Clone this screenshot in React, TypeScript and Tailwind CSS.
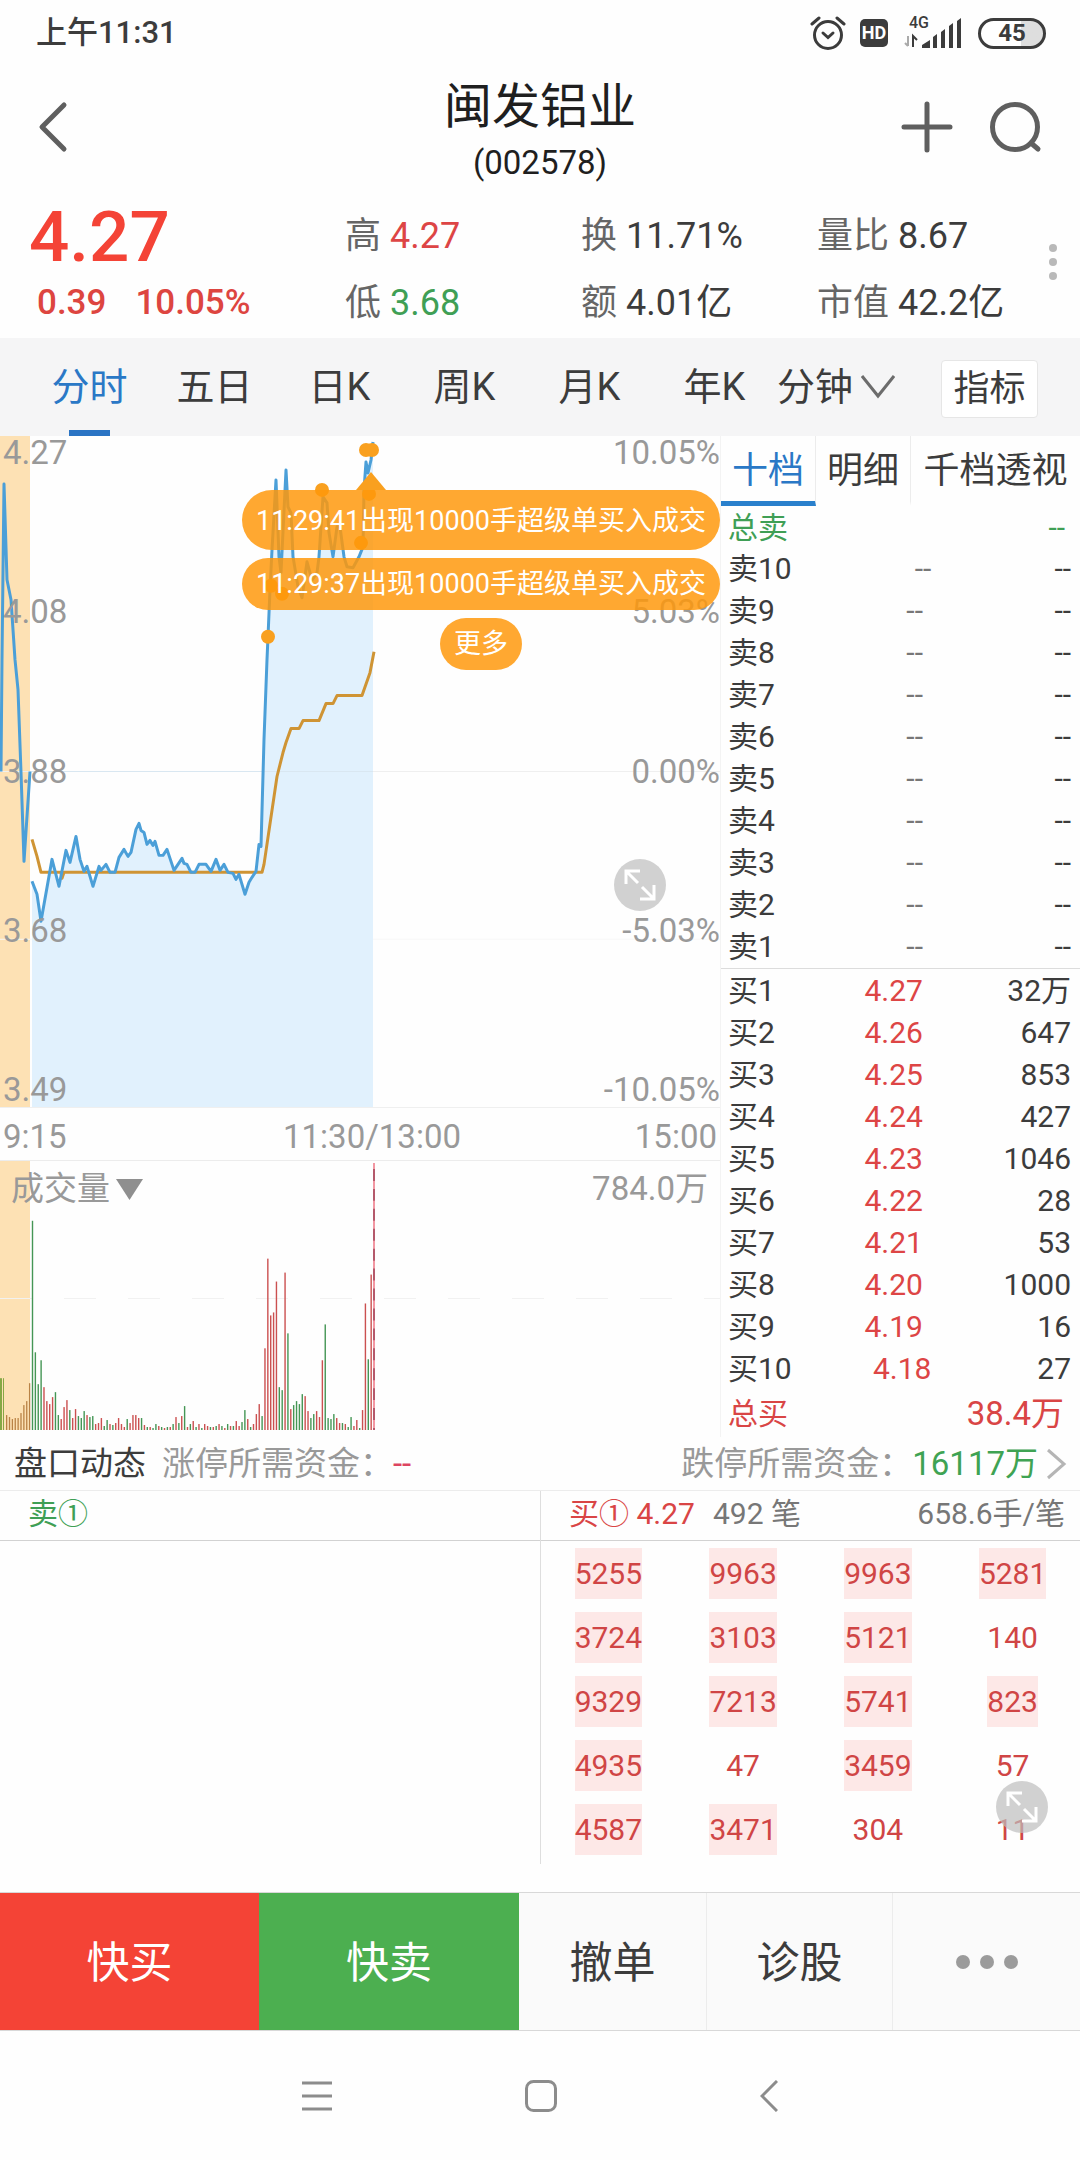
import { useState } from 'react';
import type { ReactNode } from 'react';

type Tone = 'red' | 'green' | 'dark';

const toneClass: Record<Tone, string> = {
  red: 'text-[#dd4545]',
  green: 'text-[#3f9f55]',
  dark: 'text-[#3c3c3c]',
};

const stats: { label: string; value: string; tone: Tone }[] = [
  { label: '高', value: '4.27', tone: 'red' },
  { label: '换', value: '11.71%', tone: 'dark' },
  { label: '量比', value: '8.67', tone: 'dark' },
  { label: '低', value: '3.68', tone: 'green' },
  { label: '额', value: '4.01亿', tone: 'dark' },
  { label: '市值', value: '42.2亿', tone: 'dark' },
];

const periods = ['分时', '五日', '日K', '周K', '月K', '年K'];
const bookTabs = ['十档', '明细', '千档透视'];

const sells = [10, 9, 8, 7, 6, 5, 4, 3, 2, 1];

const buys = [
  ['买1', '4.27', '32万'],
  ['买2', '4.26', '647'],
  ['买3', '4.25', '853'],
  ['买4', '4.24', '427'],
  ['买5', '4.23', '1046'],
  ['买6', '4.22', '28'],
  ['买7', '4.21', '53'],
  ['买8', '4.20', '1000'],
  ['买9', '4.19', '16'],
  ['买10', '4.18', '27'],
];

const priceScale = ['4.27', '4.08', '3.88', '3.68', '3.49'];
const percentScale = ['10.05%', '5.03%', '0.00%', '-5.03%', '-10.05%'];

const queue = [
  5255, 9963, 9963, 5281, 3724, 3103, 5121, 140, 9329, 7213, 5741, 823, 4935,
  47, 3459, 57, 4587, 3471, 304, 11,
];

const auctionLine =
  '1,336 2,224 4,48 7,144 11,164 15,224 18,254 21,337 24,426 30,336';

const priceLine =
  '32,446 37,459 41,486 52,424 59,451 66,415 70,427 76,401 80,424 84,436 87,431 93,451 99,431 101,435 106,429 110,437 115,437 119,422 124,414 128,421 131,417 136,394 139,388 141,395 144,397 147,409 150,405 153,410 155,406 159,420 163,420 167,414 174,435 182,423 184,428 187,429 191,437 195,437 199,429 206,429 211,436 216,424 220,435 224,429 228,437 233,438 236,444 239,439 245,459 249,447 252,442 256,436 259,409 261,411 264,304 267,224 268,201 270,154 272,114 276,44 279,121 281,137 286,34 288,71 291,77 293,121 298,151 302,162 307,126 312,144 317,137 319,121 323,61 327,67 329,97 333,121 337,91 340,91 344,121 347,131 353,132 359,121 363,111 364,54 366,26 368,37 371,24 373,6';

const averageLine =
  '32,404 37,421 41,437 61,437 62,443 64,437 262,437 264,429 277,341 283,317 286,307 291,293 299,293 303,285 319,285 326,268 333,268 337,260 362,260 370,237 374,216';

const markers = [
  [366, 14],
  [372, 14],
  [322, 54],
  [369, 58],
  [361, 107],
  [271, 150],
  [282, 158],
  [268, 201],
];

const auctionVolume = [15, 13, 11, 12, 12, 17, 25, 29, 47];

// one entry per minute, negative = sell side
const volume = [
  -210, -78, -46, -70, 43, 29, 26, 33, -38, -15, 11, 23, 30, -20, 12, 21, -14,
  -12, -19, 15, -13, -14, 6, 7, 12, -4, -10, 6, -5, 7, 12, 6, 3, -11, 7, 15, 15,
  12, -12, 5, -3, 3, -2, -6, 4, -3, 2, -3, 3, -6, 13, -7, 14, -24, 3, -6, 9, -3,
  6, -2, 6, 4, -3, 3, -4, 6, -4, 2, -6, 4, -4, 9, 4, -8, -20, 11, -3, 6, 16, 26,
  -14, 82, 172, 115, 118, 149, -43, -40, 158, -97, 21, -25, -29, -26, -36, 34,
  19, -12, -16, 19, 13, 70, -106, -12, -11, -16, 12, 7, -7, 6, -3, -13, 4, 10,
  -2, 20, 127, -71, 156,
];

function StatusBar() {
  return (
    <div className="flex h-[66px] items-center justify-between pl-9 pr-[34px] text-[#3c3c3c]">
      <span className="text-[31px] font-medium leading-[36px]">上午11:31</span>
      <div className="flex items-center">
        <svg width="36" height="36" viewBox="0 0 36 36" fill="none" stroke="#3c3c3c" strokeWidth="3" strokeLinecap="round">
          <circle cx="18" cy="20" r="13.5" />
          <path d="M13 18l5 4.500 5-4.500" />
          <path d="M2 9l7-6M34 9l-7-6" />
        </svg>
        <span className="ml-[14px] flex h-7 w-7 items-center justify-center rounded-[5px] bg-[#3c3c3c] text-[18px] font-bold leading-none text-white">
          HD
        </span>
        <svg className="ml-[17px] overflow-visible" width="58" height="36" viewBox="0 0 58 36" fill="#3c3c3c">
          <text x="4" y="13" fontSize="16" fontWeight="500">4G</text>
          <path d="M3 21v10M3 31l-3-3" stroke="#aaa" strokeWidth="2" fill="none" />
          <path d="M8 32V21l4 4" stroke="#3c3c3c" strokeWidth="2" fill="none" />
          <path d="M17 33v-3l8-5v8zM28 33V22l4-3v14zM36 33V17l4-3v19zM44 33V11l4-3v25zM52 33V6l4-3v30z" />
        </svg>
        <span className="ml-[15px] flex h-[31px] w-[68px] items-center justify-center rounded-full border-[3px] border-[#3c3c3c] bg-linear-to-r from-white from-65% to-[#dedede] to-65% text-[24px] font-bold leading-none">
          45
        </span>
      </div>
    </div>
  );
}

function Header() {
  return (
    <header className="grid h-[122px] grid-cols-3 items-center pl-[38px] pr-[38px]">
      <button aria-label="返回" className="w-10">
        <svg width="32" height="52" viewBox="0 0 32 52" fill="none" stroke="#5f5f5f" strokeWidth="5" strokeLinecap="round" strokeLinejoin="round">
          <path d="M26 4L4 26l22 22" />
        </svg>
      </button>
      <div className="pt-2 text-center text-[#1f1f1f]">
        <h1 className="text-[48px] leading-[64px]">闽发铝业</h1>
        <p className="text-[33px] leading-[48px]">(002578)</p>
      </div>
      <div className="flex justify-end gap-[37px]">
        <button aria-label="加自选">
          <svg width="52" height="52" viewBox="0 0 52 52" stroke="#5f5f5f" strokeWidth="5" strokeLinecap="round">
            <path d="M3 26h46M26 3v46" />
          </svg>
        </button>
        <button aria-label="搜索">
          <svg width="52" height="52" viewBox="0 0 52 52" fill="none" stroke="#5f5f5f" strokeWidth="5" strokeLinecap="round">
            <circle cx="25" cy="26" r="22.500" />
            <path d="M41 42l7 6" />
          </svg>
        </button>
      </div>
    </header>
  );
}

function Quote() {
  return (
    <section className="flex h-[150px] items-center pl-[29px] pt-[14px]">
      <div className="w-[316px] shrink-0 pb-2.5">
        <p className="text-[71px] font-medium leading-[76px] text-[#f44336]">4.27</p>
        <p className="flex gap-[29px] pl-2 text-[35px] font-medium leading-[56px] text-[#dd4540]">
          <span>0.39</span>
          <span>10.05%</span>
        </p>
      </div>
      <dl className="grid flex-1 grid-cols-[236px_236px_1fr] text-[36px] leading-[67px]">
        {stats.map((s) => (
          <div key={s.label} className="flex gap-[9px]">
            <dt className="text-[#666]">{s.label}</dt>
            <dd className={toneClass[s.tone]}>{s.value}</dd>
          </div>
        ))}
      </dl>
      <button aria-label="更多行情" className="mr-[23px] flex flex-col gap-1.5 pb-4">
        <span className="h-2 w-2 rounded-full bg-[#b9b9b9]" />
        <span className="h-2 w-2 rounded-full bg-[#b9b9b9]" />
        <span className="h-2 w-2 rounded-full bg-[#b9b9b9]" />
      </button>
    </section>
  );
}

function PeriodTabs() {
  const [active, setActive] = useState('分时');
  return (
    <nav className="flex h-[98px] items-stretch bg-[#f5f5f6] pl-[27px] pr-[42px] text-[38px] text-[#3c3c3c]">
      {periods.map((p) => (
        <button
          key={p}
          onClick={() => setActive(p)}
          className={`flex w-[125px] flex-col items-center ${
            active === p ? 'text-[#2a78c6]' : ''
          }`}
        >
          <span className="h-[92px] leading-[98px]">{p}</span>
          {active === p && <span className="h-1.5 w-[41px] bg-[#2a74c4]" />}
        </button>
      ))}
      <button className="flex items-center gap-2">
        分钟
        <svg width="34" height="24" viewBox="0 0 34 24" fill="none" stroke="#6c6c6c" strokeWidth="3">
          <path d="M1 1l16 20L33 1" />
        </svg>
      </button>
      <button className="ml-auto mt-1 h-[58px] w-[97px] self-center rounded-sm border border-[#e6e6e6] bg-white text-[36px] leading-none">
        指标
      </button>
    </nav>
  );
}

function ExpandIcon() {
  return (
    <svg width="52" height="52" viewBox="0 0 52 52" fill="none" stroke="#fff" strokeWidth="3">
      <circle cx="26" cy="26" r="26" fill="#bdbdbd" fillOpacity="0.7" stroke="none" />
      <path d="M12 25V12h14M12 12l12 12M28 28l12 12M40 26v14H26" />
    </svg>
  );
}

function ScaleLabels({ values, className }: { values: string[]; className: string }) {
  return (
    <div className={`absolute inset-y-0 flex flex-col justify-between text-[33px] leading-[34px] text-[#999] ${className}`}>
      {values.map((v) => (
        <span key={v}>{v}</span>
      ))}
    </div>
  );
}

function Alert({ children, className }: { children: ReactNode; className: string }) {
  return (
    <button className={`rounded-full bg-[#ff980a]/84 px-3.5 text-[27px] text-white ${className}`}>
      {children}
    </button>
  );
}

function PriceChart() {
  return (
    <div className="relative h-[672px] border-b border-[#efefef]">
      <svg className="block h-full w-full" viewBox="0 0 720 672" preserveAspectRatio="none" fill="none">
        <rect width="30" height="672" fill="#fde1b4" />
        <path d="M0 336h720" stroke="#efefef" strokeWidth="1" />
        <path d="M0 504h720" stroke="#f7f7f7" strokeWidth="1" />
        <polygon points={`32,672 ${priceLine} 373,672`} fill="#e1f1fd" />
        <path d="M32 336h341" stroke="#d9e7f1" strokeWidth="1" />
        <polyline points={averageLine} stroke="#cf9434" strokeWidth="3" strokeLinejoin="round" />
        <polyline points={auctionLine} stroke="#4b9fd8" strokeWidth="3" strokeLinejoin="round" />
        <polyline points={priceLine} stroke="#4b9fd8" strokeWidth="3" strokeLinejoin="round" />
        {markers.map(([x, y]) => (
          <circle key={`${x}-${y}`} cx={x} cy={y} r="7" fill="#f9a01f" />
        ))}
        <path d="M356 54l15-18 15 18z" fill="#f9a01f" />
      </svg>
      <ScaleLabels values={priceScale} className="left-[3px]" />
      <ScaleLabels values={percentScale} className="right-0 text-right" />
      <div className="absolute right-0 top-[54px] flex flex-col items-center gap-2 whitespace-nowrap">
        <Alert className="h-[60px] leading-[62px]">11:29:41出现10000手超级单买入成交</Alert>
        <Alert className="h-[52px] leading-[48px]">11:29:37出现10000手超级单买入成交</Alert>
        <Alert className="h-[52px] w-[82px] leading-[48px]">更多</Alert>
      </div>
      <button aria-label="展开走势图" className="absolute bottom-[196px] right-[54px]">
        <ExpandIcon />
      </button>
    </div>
  );
}

function VolumeChart() {
  return (
    <div className="relative h-[270px] border-t border-[#ececec]">
      <svg className="block h-full w-full" viewBox="0 0 720 270" preserveAspectRatio="none">
        <rect width="30" height="270" fill="#fde1b4" />
        <path d="M0 138h720" stroke="#f1f1f1" strokeDasharray="32 32" />
        <rect x="0" y="218" width="2" height="52" fill="#86a845" />
        <rect x="3" y="218" width="1" height="52" fill="#86a845" />
        {auctionVolume.map((h, i) => (
          <rect key={i} x={6 + i * 2.87} y={270 - h} width="1.300" height={h} fill="#b98245" />
        ))}
        {volume.map((v, i) => (
          <rect
            key={i}
            x={31.8 + i * 2.87}
            y={270 - Math.abs(v)}
            width="1.400"
            height={Math.abs(v)}
            fill={v > 0 ? '#cb5050' : '#459655'}
          />
        ))}
        <path d="M374 2v268" stroke="#ee7583" strokeWidth="1.500" />
        <path d="M374 8v262" stroke="#a0455a" strokeWidth="1.500" strokeDasharray="12 8" />
      </svg>
      <div className="absolute inset-x-0 top-1 flex items-center justify-between pl-[11px] pr-3 text-[33px] leading-[48px] text-[#999]">
        <button className="flex items-center gap-1.5">
          成交量
          <svg width="27" height="21" viewBox="0 0 27 21" fill="#8f8f8f">
            <path d="M0 0h27L13.500 21z" />
          </svg>
        </button>
        <span>784.0万</span>
      </div>
    </div>
  );
}

function BookRow({ cells, price }: { cells: string[]; price: string }) {
  return (
    <tr className="flex h-[42px] items-center text-[#3c3c3c]">
      <th scope="row" className="font-normal">{cells[0]}</th>
      <td className={`flex-1 text-right ${price}`}>{cells[1]}</td>
      <td className="flex-1 text-right">{cells[2]}</td>
    </tr>
  );
}

function OrderBook() {
  const [active, setActive] = useState('十档');
  return (
    <aside className="border-l border-[#f3f3f3]">
      <div className="flex h-[70px] text-[36px] text-[#3c3c3c]">
        {bookTabs.map((t) => (
          <button
            key={t}
            onClick={() => setActive(t)}
            className={`border-b-[5px] border-r border-r-[#ececec] pt-1.5 leading-[59px] last:flex-1 last:border-r-0 not-last:w-[95px] ${
              active === t ? 'border-b-[#2a80cc] text-[#2a78c6]' : 'border-b-transparent'
            }`}
          >
            {t}
          </button>
        ))}
      </div>
      <table className="block text-[30px] leading-[44px]">
        <tbody className="block pl-[7px] pr-[9px]">
          <tr className="flex h-[42px] justify-between pr-1.5 text-[#3f9f55]">
            <th scope="row" className="font-normal">总卖</th>
            <td>--</td>
          </tr>
          {sells.map((n) => (
            <BookRow key={n} cells={[`卖${n}`, '--', '--']} price="text-[#777]" />
          ))}
        </tbody>
        <tbody className="block border-t border-[#dcdcdc] pl-[7px] pr-[9px] pt-px">
          {buys.map((b) => (
            <BookRow key={b[0]} cells={b} price="text-[#dd4545]" />
          ))}
          <tr className="flex h-[47px] items-center justify-between pr-[7px] text-[#d94545]">
            <th scope="row" className="font-normal">总买</th>
            <td className="text-[33px]">38.4万</td>
          </tr>
        </tbody>
      </table>
    </aside>
  );
}

function LimitBar() {
  return (
    <div className="flex h-[54px] items-center border-b border-[#ececec] pl-[14px] pr-[13px] text-[33px] leading-none text-[#999]">
      <h2 className="text-[#3c3c3c]">盘口动态</h2>
      <p className="ml-4">
        涨停所需资金：<span className="text-[#dd4560]">--</span>
      </p>
      <a href="#funds" className="ml-auto flex items-center">
        跌停所需资金：<span className="text-[#3fa353]">16117万</span>
        <svg className="ml-2" width="21" height="32" viewBox="0 0 21 32" fill="none" stroke="#b5b5b5" strokeWidth="3">
          <path d="M2 2l16 14L2 30" />
        </svg>
      </a>
    </div>
  );
}

function QueuePanel() {
  return (
    <section className="mb-7 grid grid-cols-2">
      <div>
        <div className="h-[50px] border-b border-[#d2d2d2] pl-7 text-[30px] leading-[46px] text-[#3f9f55]">
          卖①
        </div>
      </div>
      <div className="relative border-l border-[#dedede]">
        <div className="flex h-[50px] border-b border-[#d2d2d2] pl-7 pr-[15px] text-[30px] leading-[46px] text-[#777]">
          <span className="text-[#d94545]">买① 4.27</span>
          <span className="ml-[18px]">492 笔</span>
          <span className="ml-auto">658.6手/笔</span>
        </div>
        <ul className="grid grid-cols-4 justify-items-center gap-y-[13px] pb-[9px] pt-[7px] text-[30px] leading-[51px] text-[#d04545]">
          {queue.map((n, i) => (
            <li key={i} className={n > 500 ? 'bg-[#fde8e7]' : ''}>
              {n}
            </li>
          ))}
        </ul>
        <button aria-label="展开队列" className="absolute bottom-[31px] right-8">
          <ExpandIcon />
        </button>
      </div>
    </section>
  );
}

function ActionBar() {
  return (
    <div className="grid h-[139px] grid-cols-[259fr_260fr_187fr_187fr_187fr] border-y border-[#d8d8d8] bg-[#fafafa] text-[43px] text-[#3c3c3c]">
      <button className="bg-[#f44336] pt-1 text-white">快买</button>
      <button className="bg-[#4caf50] pt-1 text-white">快卖</button>
      <button className="pt-1">撤单</button>
      <button className="border-x border-[#ececec] pt-1">诊股</button>
      <button aria-label="更多" className="flex items-center justify-center gap-2.5">
        <span className="h-3.5 w-3.5 rounded-full bg-[#9b9b9b]" />
        <span className="h-3.5 w-3.5 rounded-full bg-[#9b9b9b]" />
        <span className="h-3.5 w-3.5 rounded-full bg-[#9b9b9b]" />
      </button>
    </div>
  );
}

function SystemNav() {
  return (
    <nav className="flex h-[129px] items-center justify-center gap-[193px]">
      <button aria-label="最近任务">
        <svg width="30" height="32" viewBox="0 0 30 32" stroke="#8c8c8c" strokeWidth="3">
          <path d="M0 3h30M0 16h30M0 29h30" />
        </svg>
      </button>
      <button aria-label="主页">
        <svg width="32" height="32" viewBox="0 0 32 32" fill="none" stroke="#8c8c8c" strokeWidth="3">
          <rect x="1.500" y="1.500" width="29" height="29" rx="7" />
        </svg>
      </button>
      <button aria-label="系统返回" className="pl-2.5">
        <svg width="18" height="32" viewBox="0 0 18 32" fill="none" stroke="#8c8c8c" strokeWidth="3">
          <path d="M17 1L2 16l15 15" />
        </svg>
      </button>
    </nav>
  );
}

export default function App() {
  return (
    <main className="min-h-screen bg-[#fefefe] font-['Roboto','Noto_Sans_CJK_SC',sans-serif]">
      <StatusBar />
      <Header />
      <Quote />
      <PeriodTabs />
      <div className="grid grid-cols-[2fr_1fr]">
        <div>
          <PriceChart />
          <div className="grid h-[52px] grid-cols-[1fr_auto_1fr] items-center px-[3px] pt-1 text-[33px] text-[#999]">
            <span>9:15</span>
            <span className="pl-6">11:30/13:00</span>
            <span className="text-right">15:00</span>
          </div>
          <VolumeChart />
        </div>
        <OrderBook />
      </div>
      <LimitBar />
      <QueuePanel />
      <ActionBar />
      <SystemNav />
    </main>
  );
}
